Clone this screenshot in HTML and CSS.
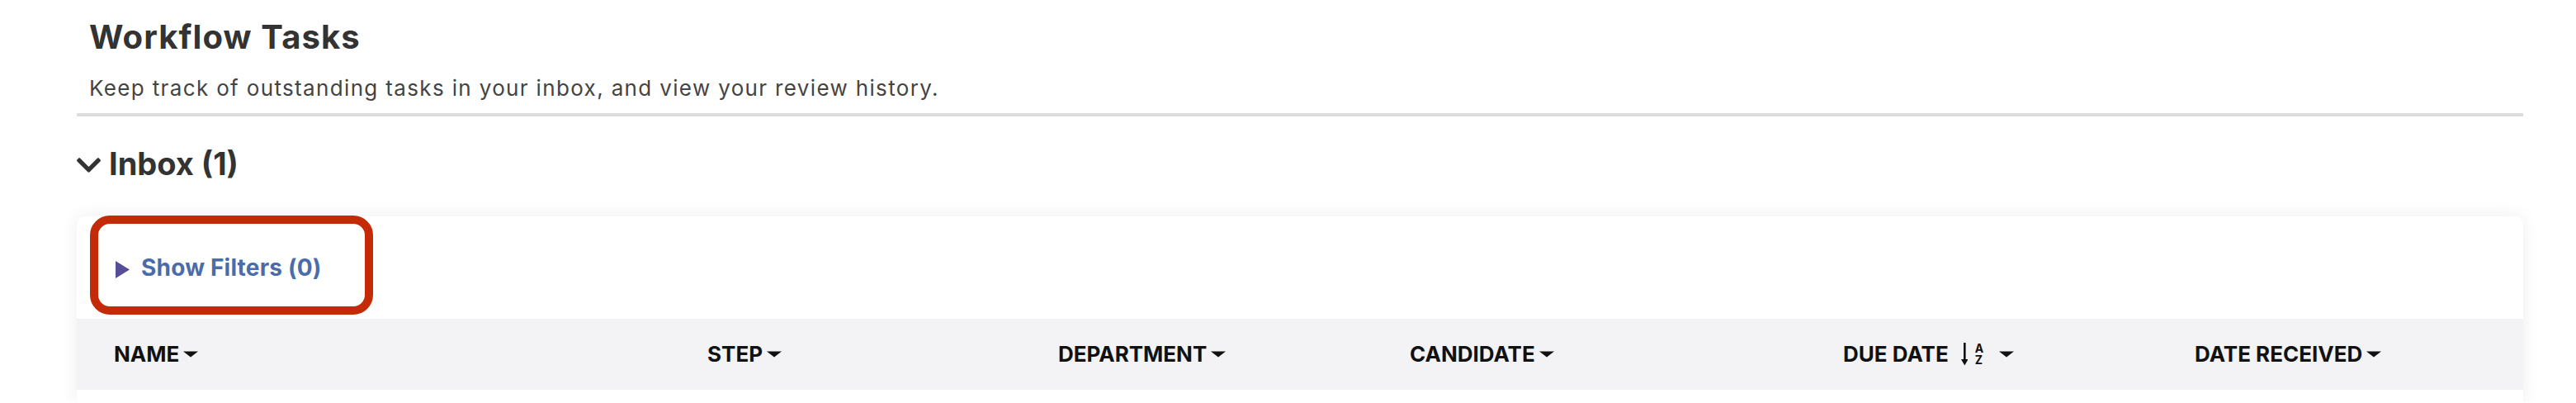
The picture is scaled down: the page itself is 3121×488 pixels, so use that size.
FILE: index.html
```html
<!DOCTYPE html>
<html lang="en">
<head>
<meta charset="utf-8">
<title>Workflow Tasks</title>
<link rel="stylesheet" href="styles.css">
</head>
<body>
<main class="page">
  <header class="intro">
    <h1 class="title">Workflow Tasks</h1>
    <p class="desc">Keep track of outstanding tasks in your inbox, and view your review history.</p>
  </header>
  <hr class="rule">
  <h2 class="section-title">
    <svg class="chevron" viewBox="5 123 438 266" aria-hidden="true"><path d="M207.029 381.476L12.686 187.132c-9.373-9.373-9.373-24.569 0-33.941l22.667-22.667c9.357-9.357 24.522-9.375 33.901-.04L224 284.505l154.745-154.021c9.379-9.335 24.544-9.317 33.901.04l22.667 22.667c9.373 9.373 9.373 24.569 0 33.941L240.971 381.476c-9.373 9.372-24.569 9.372-33.942 0z"/></svg>
    <span>Inbox (1)</span>
  </h2>
  <section class="card">
    <div class="filters">
      <svg class="disclosure" viewBox="0 0 17 21" aria-hidden="true"><polygon points="0,0 17,10.5 0,21"/></svg>
      <span class="filters-label">Show Filters (0)</span>
      <div class="highlight"></div>
    </div>
    <div class="thead">
      <div class="th">NAME<svg class="caret" viewBox="0 0 20 8"><polygon points="0,0 20,0 10,8"/></svg></div>
      <div class="th">STEP<svg class="caret" viewBox="0 0 20 8"><polygon points="0,0 20,0 10,8"/></svg></div>
      <div class="th">DEPARTMENT<svg class="caret" viewBox="0 0 20 8"><polygon points="0,0 20,0 10,8"/></svg></div>
      <div class="th">CANDIDATE<svg class="caret" viewBox="0 0 20 8"><polygon points="0,0 20,0 10,8"/></svg></div>
      <div class="th">DUE DATE<span class="sort"><svg class="sort-arrow" viewBox="0 0 8 28"><rect x="3" y="0" width="2.6" height="22"/><polygon points="0,20 8.6,20 4.3,27.5"/></svg><span class="sort-letters"><span>A</span><span>Z</span></span></span><svg class="caret caret-gap" viewBox="0 0 20 8"><polygon points="0,0 20,0 10,8"/></svg></div>
      <div class="th">DATE RECEIVED<svg class="caret" viewBox="0 0 20 8"><polygon points="0,0 20,0 10,8"/></svg></div>
    </div>
    <div class="tbody"></div>
  </section>
</main>
</body>
</html>
```
FILE: styles.css
```css
html, body {
  margin: 0;
  padding: 0;
  overflow: hidden;
  background: #ffffff;
}

body {
  font-family: Inter, "Noto Sans", Arial, sans-serif;
  color: #333333;
}

.page {
  margin-left: 93px;
  width: 2964px;
  padding-top: 22px;
}

.intro {
  padding: 0 15px;
}

.title {
  margin: 0;
  font-size: 40px;
  line-height: 46px;
  font-weight: 700;
  letter-spacing: 1.1px;
  color: #333333;
}

.desc {
  margin: 21px 0 0;
  font-size: 26px;
  line-height: 36px;
  font-weight: 400;
  letter-spacing: 1.35px;
  color: #444444;
}

.rule {
  margin: 12px 0 0;
  border: 0;
  height: 4px;
  background: #dddddd;
}

.section-title {
  margin: 34px 0 0;
  display: flex;
  align-items: center;
  gap: 10px;
  font-size: 38px;
  line-height: 46px;
  font-weight: 700;
  color: #333333;
}

.chevron {
  width: 29px;
  height: 18px;
  fill: #333333;
  margin-top: 4px;
}

.card {
  margin-top: 41px;
  background: #ffffff;
  border-radius: 10px 10px 0 0;
  box-shadow: 0 0 22px rgba(0, 0, 0, 0.07);
}

.filters {
  position: relative;
  height: 124px;
  display: flex;
  align-items: center;
  padding-left: 47px;
  gap: 14px;
}

.disclosure {
  width: 17px;
  height: 21px;
  fill: #574e98;
  margin-top: 4px;
}

.filters-label {
  font-size: 28px;
  line-height: 34px;
  font-weight: 700;
  letter-spacing: 0.2px;
  color: #4a6cab;
}

.highlight {
  position: absolute;
  left: 16px;
  top: -1px;
  width: 343px;
  height: 120px;
  box-sizing: border-box;
  border: 10px solid #c42a08;
  border-radius: 24px;
}

.thead {
  height: 86px;
  background: #f3f3f5;
  display: grid;
  grid-template-columns: 719px 425px 426px 525px 426px 1fr;
  padding-left: 45px;
  align-items: center;
}

.th {
  display: flex;
  align-items: center;
  font-size: 26px;
  line-height: 32px;
  font-weight: 700;
  color: #111111;
  white-space: nowrap;
}

.caret {
  width: 18px;
  height: 8px;
  margin-left: 5px;
  fill: #111111;
}

.caret-gap {
  margin-left: 19px;
}

.sort {
  display: inline-flex;
  align-items: center;
  margin-left: 15px;
  gap: 9px;
}

.sort-arrow {
  width: 8px;
  height: 28px;
  fill: #111111;
}

.sort-letters {
  display: flex;
  flex-direction: column;
  font-size: 14px;
  line-height: 14px;
  font-weight: 700;
}

.tbody {
  height: 15px;
}
```
